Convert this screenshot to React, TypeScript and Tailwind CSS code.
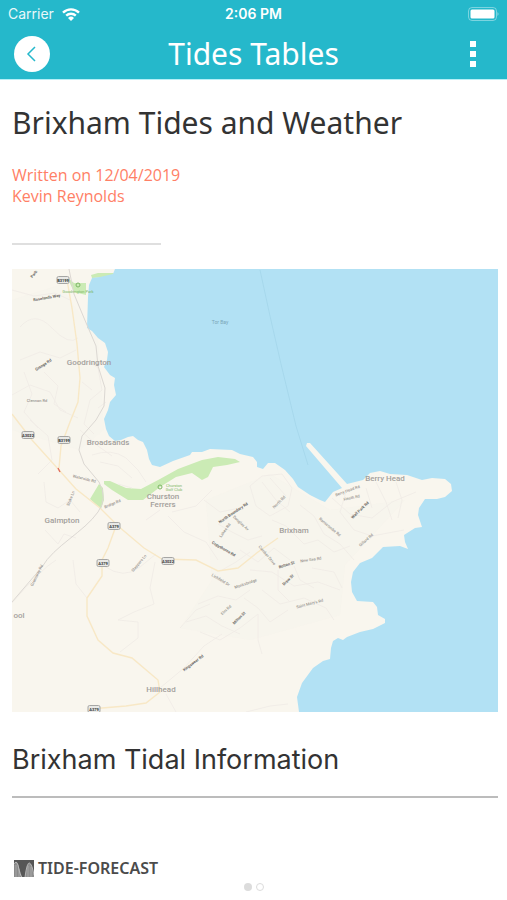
import React from 'react';

interface MapLabel {
    text: string;
    x: number;
    y: number;
    rotate?: number;
}

const TOWNS: MapLabel[] = [
    { text: 'Goodrington', x: 89, y: 365 },
    { text: 'Broadsands', x: 108, y: 445 },
    { text: 'Churston', x: 163, y: 499 },
    { text: 'Ferrers', x: 163, y: 507 },
    { text: 'Galmpton', x: 62, y: 523 },
    { text: 'Brixham', x: 294, y: 533 },
    { text: 'Berry Head', x: 385, y: 481 },
    { text: 'Hillhead', x: 161, y: 692 },
    { text: 'ool', x: 19, y: 618 },
];

const MAIN_STREETS: MapLabel[] = [
    { text: 'Roselands Way', x: 47, y: 299, rotate: -10 },
    { text: 'Park', x: 35, y: 275, rotate: -50 },
    { text: 'Grange Rd', x: 44, y: 366, rotate: -33 },
    { text: 'North Boundary Rd', x: 234, y: 514, rotate: -34 },
    { text: 'Copythorne Rd', x: 223, y: 550, rotate: 30 },
    { text: 'Bolton St', x: 287, y: 566, rotate: -17 },
    { text: 'Drew St', x: 289, y: 581, rotate: -44 },
    { text: 'Wall Park Rd', x: 361, y: 511, rotate: -44 },
    { text: 'Kingswear Rd', x: 194, y: 664, rotate: -37 },
    { text: 'Milton St', x: 240, y: 619, rotate: -44 },
];

const SIDE_STREETS: MapLabel[] = [
    { text: 'Clennon Rd', x: 37, y: 402 },
    { text: 'Waterside Rd', x: 84, y: 480, rotate: 14 },
    { text: 'Stoke Ln', x: 72, y: 499, rotate: -68 },
    { text: 'Bridge Rd', x: 113, y: 505, rotate: -24 },
    { text: 'Slappers Ln', x: 140, y: 564, rotate: -50 },
    { text: 'Greenway Rd', x: 38, y: 576, rotate: -64 },
    { text: 'Lakes Rd', x: 226, y: 531, rotate: -55 },
    { text: 'Douglas Av', x: 240, y: 524, rotate: 43 },
    { text: 'North Rd', x: 280, y: 503, rotate: -45 },
    { text: 'Cumber Drive', x: 266, y: 556, rotate: 50 },
    { text: 'New Sea Rd', x: 311, y: 561, rotate: -8 },
    { text: 'Berry Head Rd', x: 348, y: 492, rotate: -20 },
    { text: 'Heath Rd', x: 352, y: 499, rotate: -12 },
    { text: 'Ranscombe Rd', x: 329, y: 528, rotate: 40 },
    { text: 'Gillard Rd', x: 367, y: 541, rotate: -42 },
    { text: 'Lichfield Dr', x: 220, y: 581, rotate: 31 },
    { text: 'Monksbridge', x: 246, y: 585, rotate: -19 },
    { text: 'Elm Rd', x: 227, y: 611, rotate: -42 },
    { text: "Saint Mary's Rd", x: 310, y: 605, rotate: -15 },
];

const SHIELDS: MapLabel[] = [
    { text: 'B3199', x: 63, y: 280 },
    { text: 'A3022', x: 28, y: 435 },
    { text: 'B3199', x: 64, y: 440 },
    { text: 'A379', x: 114, y: 526 },
    { text: 'A379', x: 103, y: 563 },
    { text: 'A3022', x: 168, y: 561 },
    { text: 'A379', x: 94, y: 709 },
];

const SEA =
    'M115 269 L113 274 L100 277 L92 278 L89 285 L88 297 L87 328 L92 331 L98 338 L105 343 L108 352 L107 360 L104 367 L110 375 L115 378 L114 385 L116 395 L110 402 L108 410 L104 419 L106 429 L109 436 L115 441 L121 440 L128 437 L133 436 L138 440 L143 442 L147 450 L149 459 L152 465 L160 467 L173 461 L190 455 L192 452 L202 452 L210 449 L232 450 L240 454 L253 457 L257 462 L257 467 L263 469 L268 463 L275 463 L285 470 L293 479 L298 487 L310 495 L320 500 L325 502 L333 492 L342 488 L306 446 L307 443 L310 443 L347 484 L363 480 L370 473 L380 471 L390 474 L407 475 L422 480 L432 478 L445 479 L451 484 L452 491 L445 497 L437 499 L425 499 L419 508 L418 515 L422 527 L415 528 L404 535 L405 542 L408 549 L400 546 L383 547 L372 558 L360 563 L353 572 L351 582 L352 592 L357 601 L373 602 L377 607 L378 615 L385 619 L385 623 L373 629 L360 632 L347 637 L343 640 L338 638 L333 641 L331 648 L330 659 L323 661 L313 668 L302 683 L297 697 L299 712 L498 712 L498 269 Z';

const LANES = [
    'M12 290 L34 296 L55 293 L70 300 M20 360 L40 352 L60 358 L76 350 M12 395 L30 385 L50 392 L60 410 L78 418',
    'M20 327 Q35 310 52 328 T78 338 M24 372 L32 394 L24 412 L38 428 M44 372 L58 386 L54 404 L66 412',
    'M86 360 L98 368 L102 390 L90 400 L84 424 L94 434 M92 390 L82 382 M98 408 L106 402 M80 430 L98 446 L112 456',
    'M30 420 L48 436 L52 460 L38 474 M44 482 L46 502 L58 508 L70 500 L80 512 M45 530 L58 544 L64 534 L76 538',
    'M92 455 Q112 448 126 458 L138 470 L146 482 M100 462 L118 466 L132 478 M118 484 L132 488',
    'M73 560 L76 584 L87 598 M104 566 Q124 580 140 567 L156 554 M155 562 L150 588 L154 604 L134 612 L118 620 L138 622 L138 638 L120 652',
    'M172 512 L196 506 L212 490 M168 516 L184 532 L206 542 L218 560 M146 520 L160 510',
    'M250 486 L262 476 L282 474 L292 488 L288 506 L270 516 L256 506 Z M262 482 L276 500 L290 512 M270 478 L286 496',
    'M204 500 L220 512 L240 508 M218 524 L232 532 L248 540 L262 536 M240 550 L258 562 L274 548 L290 560',
    'M272 520 L286 526 L304 544 L318 540 L334 552 L350 546 M300 505 L314 516 L324 534 L340 544 L354 560',
    'M332 498 L350 514 L372 518 L392 502 L416 492 M346 492 L340 512 L354 530 L372 536 L404 530',
    'M376 482 L386 502 L392 520 M396 482 L402 500 L398 518 M366 488 L372 508',
    'M250 570 L272 572 L294 586 L318 582 L340 590 M262 590 L280 604 L304 598 L326 608 L334 620',
    'M244 598 L258 608 L270 622 L288 610 M198 604 L218 596 L236 600 L250 590 M186 622 L206 616 L222 626 L240 634',
    'M180 628 L196 610 L210 604 M200 632 L220 640 L240 628 L258 614 L258 640 L262 654 M294 566 L300 580 L314 588',
    'M12 603 Q40 570 56 560 M160 688 L184 668 L204 646 L222 634 M246 712 L270 706 L288 704 M166 694 L176 712',
    'M312 568 L334 572 L342 588 M222 570 L236 562 L250 552 M278 570 L278 590 L290 602',
];

const YELLOW_ROADS = [
    'M67 280 L72 308 L77 344 L80 378 L78 402 L70 422 L61 446 L59 468',
    'M12 414 L32 440 L50 460 L59 470 L76 489 L100 508 L118 526 L144 548 L162 559 L196 560 L218 571 L238 568 L258 552 L278 538',
    'M116 526 L108 548 L102 560 L102 576 L87 598 L87 616 L98 640 L113 653 L132 658 L158 680 L160 692 L146 703 L126 706 L90 709',
];

const StatusBar = () => (
    <div className="flex h-7 items-center px-2 text-sm text-white">
        <div className="flex flex-1 items-center gap-2">
            <span className="opacity-90">Carrier</span>
            <svg viewBox="0 0 18 13" className="h-[13px] w-[18px]" fill="none" stroke="white" strokeWidth="2.4" aria-hidden="true">
                <path d="M1 4.6 A11.5 11.5 0 0 1 17 4.6" />
                <path d="M4.2 7.7 A7 7 0 0 1 13.8 7.7" />
                <path d="M9 13 L6 9.9 A4.4 4.4 0 0 1 12 9.9 Z" fill="white" stroke="none" />
            </svg>
        </div>
        <span className="font-semibold">2:06 PM</span>
        <div className="flex flex-1 justify-end">
            <svg viewBox="0 0 32 14" className="h-3.5 w-8" aria-hidden="true">
                <rect x="1.5" y="0.5" width="28" height="13" rx="3.5" fill="none" stroke="white" strokeOpacity="0.4" />
                <rect x="3.5" y="2.5" width="24" height="9" rx="1.5" fill="white" />
                <path d="M30.5 5 Q32.5 7 30.5 9 Z" fill="white" fillOpacity="0.5" />
            </svg>
        </div>
    </div>
);

const Header = () => (
    <header className="border-b border-[#b5eff7] bg-[#25b8cb] font-['Inter',sans-serif]">
        <StatusBar />
        <div className="flex h-[51px] items-center px-3.5">
            <div className="flex flex-1">
                <button type="button" aria-label="Back" className="flex size-9 items-center justify-center rounded-full bg-white">
                    <svg viewBox="0 0 36 36" className="size-9" fill="none" stroke="#25b8cb" strokeWidth="1.5">
                        <path d="M21 11 L14 18 L21 25" />
                    </svg>
                </button>
            </div>
            <h1 className="font-['Noto_Sans','Open_Sans',sans-serif] text-3xl font-normal text-white">Tides Tables</h1>
            <div className="flex flex-1 justify-end">
                <button type="button" aria-label="More options" className="flex h-9 w-10 items-center justify-center">
                    <svg viewBox="0 0 6 26" className="h-[26px] w-1.5" fill="white">
                        <rect width="6" height="6" />
                        <rect y="10" width="6" height="6" />
                        <rect y="20" width="6" height="6" />
                    </svg>
                </button>
            </div>
        </div>
    </header>
);

const Labels = ({ items }: { items: MapLabel[] }) => (
    <>
        {items.map((l) => (
            <text key={`${l.text}-${l.x}`} transform={`translate(${l.x} ${l.y}) rotate(${l.rotate ?? 0})`}>
                {l.text}
            </text>
        ))}
    </>
);

const CoastMap = () => (
    <svg
        viewBox="12 269 486 443"
        role="img"
        aria-label="Map of Brixham and Tor Bay"
        className="block h-auto w-full font-['Roboto',sans-serif]"
        textAnchor="middle"
    >
        <rect x="12" y="269" width="486" height="443" fill="#f9f6ee" />

        {/* Built-up areas */}
        <g fill="#f6f3ec" fillOpacity="0.5">
            <path d="M12 300 L60 285 L98 340 L104 430 L80 450 L12 430 Z" />
            <path d="M206 500 L270 474 L330 510 L405 500 L345 565 L340 615 L250 640 L180 628 L212 580 Z" />
        </g>

        {/* Parks and golf course */}
        <g fill="#cbebb5">
            <path d="M67 277 L74 283 L86 283 L86 295 L74 292 Z" />
            <path d="M91 275 L98 273 L115 273 L109 277 L92 278 Z" />
            <path d="M104 481 L110 481 L126 488 L141 489 L160 479 L178 469 L202 460 L218 457 L235 459 L240 462 L227 465 L213 467 L208 477 L202 480 L192 473 L176 477 L160 487 L143 500 L128 500 L112 490 L104 484 Z" />
            <path d="M99 484 L103 488 L104 500 L101 509 L90 499 Z" />
        </g>

        <path d={SEA} fill="#b2e1f4" />
        <path d="M260 270 L270 316 L281 364 L296 426 L308 465" fill="none" stroke="#a3d6ea" strokeWidth="0.8" />

        <g fill="none" stroke="#f0ece6" strokeWidth="0.9">
            {LANES.map((d) => (
                <path key={d} d={d} />
            ))}
        </g>
        <g fill="none" stroke="#f8e8c6" strokeWidth="1.4">
            {YELLOW_ROADS.map((d) => (
                <path key={d} d={d} />
            ))}
        </g>

        {/* Railway */}
        <path
            d="M69 269 L74 294 L84 318 L96 346 L98 366 L105 388 L104 406 L96 420 L82 436 L79 450 L84 464 L99 482 Q108 498 98 512 C84 532 54 546 42 567 L12 602"
            fill="none"
            stroke="#dcd8d3"
            strokeWidth="1"
        />
        <path d="M58 468 L60 472" stroke="#e2705f" strokeWidth="1.4" />

        <g fontSize="8" fontWeight="500" fill="#a3a09c">
            <Labels items={TOWNS} />
        </g>
        <g fontSize="4" fontWeight="700" fill="#6b6865">
            <Labels items={MAIN_STREETS} />
        </g>
        <g fontSize="4" fontWeight="500" fill="#999590">
            <Labels items={SIDE_STREETS} />
        </g>

        <text x="220" y="324" fontSize="5" fill="#7aa6b8">Tor Bay</text>
        <g fontSize="4" fill="#7db765">
            <text x="78" y="293">Goodrington Park</text>
            <text x="174" y="487">Churston</text>
            <text x="174" y="491">Golf Club</text>
            <circle cx="78" cy="285" r="2" fill="none" stroke="#7db765" />
            <circle cx="160" cy="487" r="2" fill="none" stroke="#7db765" />
        </g>

        {SHIELDS.map((s) => (
            <g key={`${s.x}-${s.y}`}>
                <rect x={s.x - 6} y={s.y - 3.5} width="12" height="7" rx="1.5" fill="#e9e9e6" stroke="#a6a6a4" />
                <text x={s.x} y={s.y + 1.5} fontSize="4" fontWeight="700" fill="#333">{s.text}</text>
            </g>
        ))}
    </svg>
);

const TideLogo = () => (
    <svg viewBox="0 0 20 17" className="h-[17px] w-5" aria-hidden="true">
        <rect width="20" height="17" fill="#565656" />
        <path d="M0 17 V5 Q2 -1 4 4 L8 17 Z" fill="#8a8a8a" />
        <path d="M11 17 Q13 3 15.5 3 Q18 3 20 15 V17 Z" fill="#8e8e8e" />
        <path d="M0 4 Q2 0 4 5 Q6 16 8 17 M11 17 Q13 2 15.5 3 Q18 4 20 15" fill="none" stroke="#c4c4c4" strokeWidth="0.8" />
        <path d="M2 5 V17 M5 9 V17 M14 6 V17 M17 7 V17" stroke="#b8b8b8" strokeWidth="0.6" />
    </svg>
);

const App: React.FC = () => {
    return (
        <div className="min-h-screen bg-white text-[#333]">
            <Header />
            <main className="pl-3 pr-[9px]">
                <h2 className="pt-[23px] font-['Noto_Sans','Open_Sans',sans-serif] text-3xl leading-10 font-normal">
                    Brixham Tides and Weather
                </h2>
                <p className="mt-[22px] font-['Open_Sans',sans-serif] text-base leading-[21px] text-[#ff8066]">
                    Written on 12/04/2019
                    <br />
                    Kevin Reynolds
                </p>
                <hr className="mt-9 w-[149px] border-t-2 border-[#dfdfdf]" />

                <div className="mt-6">
                    <CoastMap />
                </div>

                <h3 className="mt-7 font-['Inter',sans-serif] text-[27px] leading-10">Brixham Tidal Information</h3>
                <hr className="mt-4 border-t-2 border-[#bcbcbc]" />

                <a href="#tide-forecast" className="mt-[60px] flex items-center gap-1 pl-0.5 font-['Noto_Sans','Open_Sans',sans-serif] text-base leading-5 font-semibold text-[#4b4b4b]">
                    <TideLogo />
                    TIDE-FORECAST
                </a>
            </main>
            <nav aria-label="Pages" className="mt-[5px] flex justify-center gap-1">
                <button type="button" aria-label="Page 1" className="size-2 rounded-full bg-[#dcdcdc]" />
                <button type="button" aria-label="Page 2" className="size-2 rounded-full border border-[#dcdcdc]" />
            </nav>
        </div>
    );
};

export default App;
